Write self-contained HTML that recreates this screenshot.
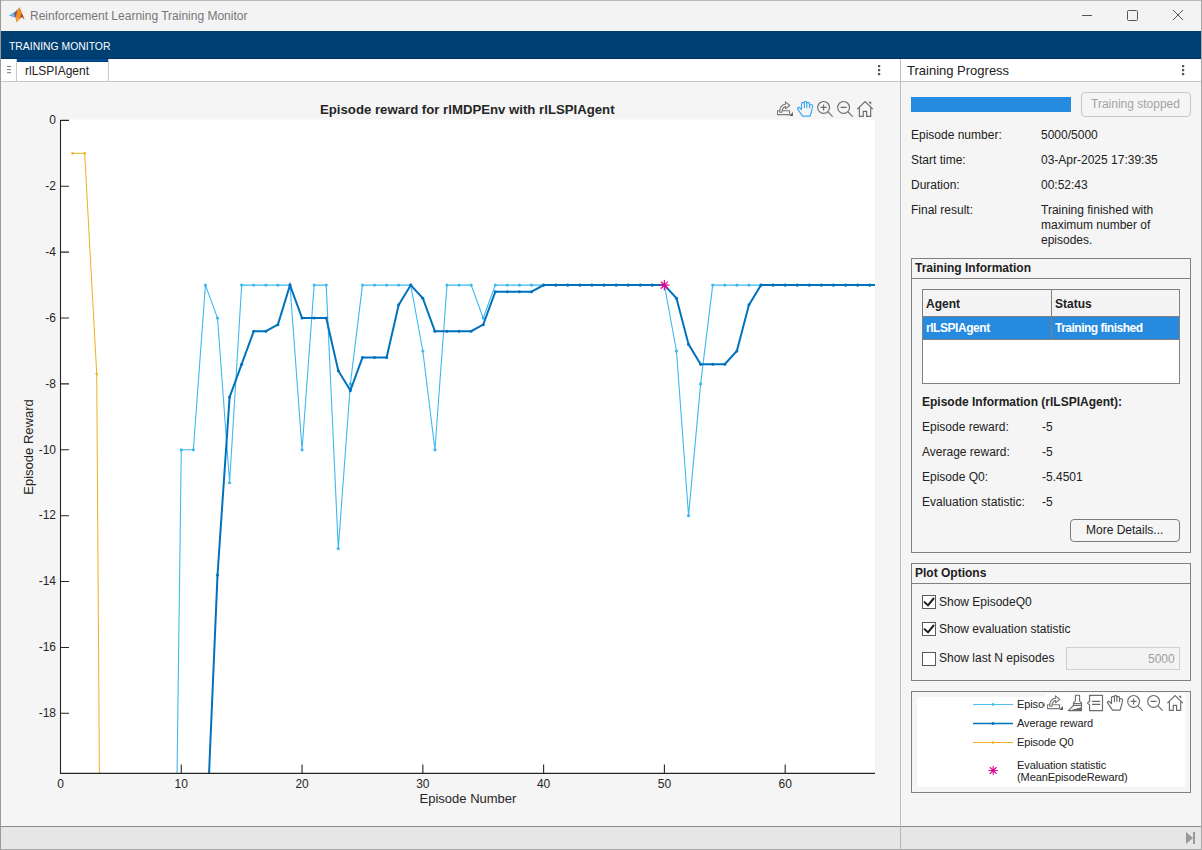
<!DOCTYPE html>
<html><head><meta charset="utf-8">
<style>
*{box-sizing:border-box;margin:0;padding:0}
html,body{width:1202px;height:850px;overflow:hidden;background:#f5f5f5;font-family:"Liberation Sans",sans-serif;color:#212121}
.a{position:absolute}
#win{position:absolute;left:0;top:0;width:1202px;height:850px;background:#f5f5f5}
#title{left:0;top:0;width:1202px;height:31px;background:#f3f3f3}
#title .t{left:30px;top:9px;font-size:12px;color:#777;white-space:nowrap}
#bluebar{left:0;top:31px;width:1202px;height:28px;background:#003f72;border-bottom:1px solid #002f66}
#bluebar .t{left:9px;top:10px;font-size:10.4px;color:#fff;white-space:nowrap;letter-spacing:0px}
.lbl{font-size:12px;white-space:nowrap;color:#212121}
.b{font-weight:bold}
svg{position:absolute;left:0;top:0;overflow:visible}
</style></head><body>
<div id="win">
<!-- title bar -->
<div class="a" id="title">
  <svg width="30" height="30" viewBox="0 0 30 30">
    <path d="M9 15.6 L13.5 12.8 L17.6 9.6 L17 14.5 L15.2 17.6 Z" fill="#4a9de0"/>
    <path d="M9 15.6 L12.5 13.6 L15 15.5 Z" fill="#7cc0f2"/>
    <path d="M14.6 13.2 L19.6 7.6 L24.6 19.4 L21.6 17 L16.6 22 Z" fill="#b53c18"/>
    <path d="M17.2 10.6 L19.6 7.6 L21.8 13.4 L19.6 18.6 L16.6 22 L15.8 17.8 Z" fill="#ef8f2c"/>
    <path d="M16.6 22 L19.6 18.6 L17 17.5 Z" fill="#f5b13c"/>
  </svg>
  <div class="a t">Reinforcement Learning Training Monitor</div>
  <svg width="1202" height="31">
    <line x1="1082" y1="15.5" x2="1092" y2="15.5" stroke="#555" stroke-width="1"/>
    <rect x="1127.5" y="10.5" width="10" height="10" rx="1" fill="none" stroke="#555" stroke-width="1"/>
    <path d="M1173 10 L1183 20 M1183 10 L1173 20" stroke="#555" stroke-width="1"/>
  </svg>
</div>
<div class="a" id="bluebar"><div class="a t">TRAINING MONITOR</div></div>

<!-- left tab row -->
<div class="a" style="left:0;top:59px;width:900px;height:23px;background:#fff;border-bottom:1px solid #c6c6c6"></div>
<div class="a" style="left:0;top:59px;width:17px;height:23px;background:#fff;border-right:1px solid #c8c8c8;border-bottom:1px solid #c8c8c8"></div>
<svg width="20" height="90"><path d="M7 66.5 H11 M7 69.7 H11 M7 72.7 H11" stroke="#7a7a7a" stroke-width="1"/></svg>
<div class="a" style="left:17px;top:59px;width:91px;height:3px;background:#004f8c;border-bottom:1px solid #003d80"></div>
<div class="a" style="left:108px;top:59px;width:1px;height:23px;background:#c8c8c8"></div>
<div class="a lbl" style="left:25px;top:64px;font-size:12px">rlLSPIAgent</div>
<svg width="900" height="90"><path d="M878 65h2.2v2.2h-2.2z M878 69h2.2v2.2h-2.2z M878 73h2.2v2.2h-2.2z" fill="#555"/></svg>

<!-- plot area -->
<div class="a b" style="left:320px;top:102px;font-size:13.2px;color:#262626;white-space:nowrap">Episode reward for rlMDPEnv with rlLSPIAgent</div>
<svg width="900" height="830">
  <rect x="60.5" y="119.5" width="814.5" height="654" fill="#fff"/>
  <defs><clipPath id="pc"><rect x="60.5" y="119.5" width="814.5" height="654"/></clipPath></defs>
  <g clip-path="url(#pc)">
  
<polyline points="72.58,153.34 84.66,153.34 96.73,374.04 108.81,2185.74 120.89,2096.80 132.97,2096.80 145.05,2096.80 157.12,2096.80 169.20,2096.80 181.28,2096.80 193.36,2096.80 205.44,2096.80 217.51,2096.80 229.59,2096.80 241.67,2096.80 253.75,2096.80 265.83,2096.80 277.90,2096.80 289.98,2096.80 302.06,2096.80 314.14,2096.80 326.22,2096.80 338.29,2096.80 350.37,2096.80 362.45,2096.80 374.53,2096.80 386.61,2096.80 398.68,2096.80 410.76,2096.80 422.84,2096.80 434.92,2096.80 447.00,2096.80 459.07,2096.80 471.15,2096.80 483.23,2096.80 495.31,2096.80 507.39,2096.80 519.46,2096.80 531.54,2096.80 543.62,2096.80 555.70,2096.80 567.78,2096.80 579.85,2096.80 591.93,2096.80 604.01,2096.80 616.09,2096.80 628.17,2096.80 640.24,2096.80 652.32,2096.80 664.40,2096.80 676.48,2096.80 688.56,2096.80 700.63,2096.80 712.71,2096.80 724.79,2096.80 736.87,2096.80 748.95,2096.80 761.02,2096.80 773.10,2096.80 785.18,2096.80 797.26,2096.80 809.34,2096.80 821.41,2096.80 833.49,2096.80 845.57,2096.80 857.65,2096.80 869.73,2096.80 881.80,2096.80 893.88,2096.80 905.96,2096.80" fill="none" stroke="#EDB120" stroke-width="1"/>
<g fill="#EDB120"><circle cx="72.58" cy="153.34" r="1.3"/><circle cx="84.66" cy="153.34" r="1.3"/><circle cx="96.73" cy="374.04" r="1.3"/></g>
<polyline points="72.58,2096.80 84.66,1932.10 96.73,1767.40 108.81,1701.52 120.89,1602.70 132.97,1503.88 145.05,1438.00 157.12,1734.46 169.20,1372.12 181.28,449.80 193.36,449.80 205.44,285.10 217.51,318.04 229.59,482.74 241.67,285.10 253.75,285.10 265.83,285.10 277.90,285.10 289.98,285.10 302.06,449.80 314.14,285.10 326.22,285.10 338.29,548.62 350.37,383.92 362.45,285.10 374.53,285.10 386.61,285.10 398.68,285.10 410.76,285.10 422.84,350.98 434.92,449.80 447.00,285.10 459.07,285.10 471.15,285.10 483.23,318.04 495.31,285.10 507.39,285.10 519.46,285.10 531.54,285.10 543.62,285.10 555.70,285.10 567.78,285.10 579.85,285.10 591.93,285.10 604.01,285.10 616.09,285.10 628.17,285.10 640.24,285.10 652.32,285.10 664.40,285.10 676.48,350.98 688.56,515.68 700.63,383.92 712.71,285.10 724.79,285.10 736.87,285.10 748.95,285.10 761.02,285.10 773.10,285.10 785.18,285.10 797.26,285.10 809.34,285.10 821.41,285.10 833.49,285.10 845.57,285.10 857.65,285.10 869.73,285.10 881.80,285.10 893.88,285.10 905.96,285.10" fill="none" stroke="#3FB8EE" stroke-width="1.1"/>
<g fill="#3FB8EE"><circle cx="181.28" cy="449.80" r="1.6"/><circle cx="193.36" cy="449.80" r="1.6"/><circle cx="205.44" cy="285.10" r="1.6"/><circle cx="217.51" cy="318.04" r="1.6"/><circle cx="229.59" cy="482.74" r="1.6"/><circle cx="241.67" cy="285.10" r="1.6"/><circle cx="253.75" cy="285.10" r="1.6"/><circle cx="265.83" cy="285.10" r="1.6"/><circle cx="277.90" cy="285.10" r="1.6"/><circle cx="289.98" cy="285.10" r="1.6"/><circle cx="302.06" cy="449.80" r="1.6"/><circle cx="314.14" cy="285.10" r="1.6"/><circle cx="326.22" cy="285.10" r="1.6"/><circle cx="338.29" cy="548.62" r="1.6"/><circle cx="350.37" cy="383.92" r="1.6"/><circle cx="362.45" cy="285.10" r="1.6"/><circle cx="374.53" cy="285.10" r="1.6"/><circle cx="386.61" cy="285.10" r="1.6"/><circle cx="398.68" cy="285.10" r="1.6"/><circle cx="410.76" cy="285.10" r="1.6"/><circle cx="422.84" cy="350.98" r="1.6"/><circle cx="434.92" cy="449.80" r="1.6"/><circle cx="447.00" cy="285.10" r="1.6"/><circle cx="459.07" cy="285.10" r="1.6"/><circle cx="471.15" cy="285.10" r="1.6"/><circle cx="483.23" cy="318.04" r="1.6"/><circle cx="495.31" cy="285.10" r="1.6"/><circle cx="507.39" cy="285.10" r="1.6"/><circle cx="519.46" cy="285.10" r="1.6"/><circle cx="531.54" cy="285.10" r="1.6"/><circle cx="543.62" cy="285.10" r="1.6"/><circle cx="555.70" cy="285.10" r="1.6"/><circle cx="567.78" cy="285.10" r="1.6"/><circle cx="579.85" cy="285.10" r="1.6"/><circle cx="591.93" cy="285.10" r="1.6"/><circle cx="604.01" cy="285.10" r="1.6"/><circle cx="616.09" cy="285.10" r="1.6"/><circle cx="628.17" cy="285.10" r="1.6"/><circle cx="640.24" cy="285.10" r="1.6"/><circle cx="652.32" cy="285.10" r="1.6"/><circle cx="664.40" cy="285.10" r="1.6"/><circle cx="676.48" cy="350.98" r="1.6"/><circle cx="688.56" cy="515.68" r="1.6"/><circle cx="700.63" cy="383.92" r="1.6"/><circle cx="712.71" cy="285.10" r="1.6"/><circle cx="724.79" cy="285.10" r="1.6"/><circle cx="736.87" cy="285.10" r="1.6"/><circle cx="748.95" cy="285.10" r="1.6"/><circle cx="761.02" cy="285.10" r="1.6"/><circle cx="773.10" cy="285.10" r="1.6"/><circle cx="785.18" cy="285.10" r="1.6"/><circle cx="797.26" cy="285.10" r="1.6"/><circle cx="809.34" cy="285.10" r="1.6"/><circle cx="821.41" cy="285.10" r="1.6"/><circle cx="833.49" cy="285.10" r="1.6"/><circle cx="845.57" cy="285.10" r="1.6"/><circle cx="857.65" cy="285.10" r="1.6"/><circle cx="869.73" cy="285.10" r="1.6"/><circle cx="881.80" cy="285.10" r="1.6"/><circle cx="893.88" cy="285.10" r="1.6"/><circle cx="905.96" cy="285.10" r="1.6"/></g>
<polyline points="72.58,2096.80 84.66,2014.45 96.73,1932.10 108.81,1874.45 120.89,1820.10 132.97,1701.52 145.05,1602.70 157.12,1596.11 169.20,1530.23 181.28,1299.65 193.36,1088.84 205.44,858.26 217.51,574.97 229.59,397.10 241.67,364.16 253.75,331.22 265.83,331.22 277.90,324.63 289.98,285.10 302.06,318.04 314.14,318.04 326.22,318.04 338.29,370.74 350.37,390.51 362.45,357.57 374.53,357.57 386.61,357.57 398.68,304.86 410.76,285.10 422.84,298.28 434.92,331.22 447.00,331.22 459.07,331.22 471.15,331.22 483.23,324.63 495.31,291.69 507.39,291.69 519.46,291.69 531.54,291.69 543.62,285.10 555.70,285.10 567.78,285.10 579.85,285.10 591.93,285.10 604.01,285.10 616.09,285.10 628.17,285.10 640.24,285.10 652.32,285.10 664.40,285.10 676.48,298.28 688.56,344.39 700.63,364.16 712.71,364.16 724.79,364.16 736.87,350.98 748.95,304.86 761.02,285.10 773.10,285.10 785.18,285.10 797.26,285.10 809.34,285.10 821.41,285.10 833.49,285.10 845.57,285.10 857.65,285.10 869.73,285.10 881.80,285.10 893.88,285.10 905.96,285.10" fill="none" stroke="#0072BD" stroke-width="2"/>
<g fill="#0072BD"><circle cx="217.51" cy="574.97" r="1.5"/><circle cx="229.59" cy="397.10" r="1.5"/><circle cx="241.67" cy="364.16" r="1.5"/><circle cx="253.75" cy="331.22" r="1.5"/><circle cx="265.83" cy="331.22" r="1.5"/><circle cx="277.90" cy="324.63" r="1.5"/><circle cx="289.98" cy="285.10" r="1.5"/><circle cx="302.06" cy="318.04" r="1.5"/><circle cx="314.14" cy="318.04" r="1.5"/><circle cx="326.22" cy="318.04" r="1.5"/><circle cx="338.29" cy="370.74" r="1.5"/><circle cx="350.37" cy="390.51" r="1.5"/><circle cx="362.45" cy="357.57" r="1.5"/><circle cx="374.53" cy="357.57" r="1.5"/><circle cx="386.61" cy="357.57" r="1.5"/><circle cx="398.68" cy="304.86" r="1.5"/><circle cx="410.76" cy="285.10" r="1.5"/><circle cx="422.84" cy="298.28" r="1.5"/><circle cx="434.92" cy="331.22" r="1.5"/><circle cx="447.00" cy="331.22" r="1.5"/><circle cx="459.07" cy="331.22" r="1.5"/><circle cx="471.15" cy="331.22" r="1.5"/><circle cx="483.23" cy="324.63" r="1.5"/><circle cx="495.31" cy="291.69" r="1.5"/><circle cx="507.39" cy="291.69" r="1.5"/><circle cx="519.46" cy="291.69" r="1.5"/><circle cx="531.54" cy="291.69" r="1.5"/><circle cx="543.62" cy="285.10" r="1.5"/><circle cx="555.70" cy="285.10" r="1.5"/><circle cx="567.78" cy="285.10" r="1.5"/><circle cx="579.85" cy="285.10" r="1.5"/><circle cx="591.93" cy="285.10" r="1.5"/><circle cx="604.01" cy="285.10" r="1.5"/><circle cx="616.09" cy="285.10" r="1.5"/><circle cx="628.17" cy="285.10" r="1.5"/><circle cx="640.24" cy="285.10" r="1.5"/><circle cx="652.32" cy="285.10" r="1.5"/><circle cx="664.40" cy="285.10" r="1.5"/><circle cx="676.48" cy="298.28" r="1.5"/><circle cx="688.56" cy="344.39" r="1.5"/><circle cx="700.63" cy="364.16" r="1.5"/><circle cx="712.71" cy="364.16" r="1.5"/><circle cx="724.79" cy="364.16" r="1.5"/><circle cx="736.87" cy="350.98" r="1.5"/><circle cx="748.95" cy="304.86" r="1.5"/><circle cx="761.02" cy="285.10" r="1.5"/><circle cx="773.10" cy="285.10" r="1.5"/><circle cx="785.18" cy="285.10" r="1.5"/><circle cx="797.26" cy="285.10" r="1.5"/><circle cx="809.34" cy="285.10" r="1.5"/><circle cx="821.41" cy="285.10" r="1.5"/><circle cx="833.49" cy="285.10" r="1.5"/><circle cx="845.57" cy="285.10" r="1.5"/><circle cx="857.65" cy="285.10" r="1.5"/><circle cx="869.73" cy="285.10" r="1.5"/><circle cx="881.80" cy="285.10" r="1.5"/><circle cx="893.88" cy="285.10" r="1.5"/><circle cx="905.96" cy="285.10" r="1.5"/></g>

  </g>
<g stroke="#262626" stroke-width="1.1" fill="none"><path d="M60.5 120 V773.4 H875"/><path d="M60.5 120.40 h8.5 M60.5 186.28 h8.5 M60.5 252.16 h8.5 M60.5 318.04 h8.5 M60.5 383.92 h8.5 M60.5 449.80 h8.5 M60.5 515.68 h8.5 M60.5 581.56 h8.5 M60.5 647.44 h8.5 M60.5 713.32 h8.5"/><path d="M181.28 773.4 v-9 M302.06 773.4 v-9 M422.84 773.4 v-9 M543.62 773.4 v-9 M664.40 773.4 v-9 M785.18 773.4 v-9"/></g><g font-family="Liberation Sans" font-size="12" fill="#262626" text-anchor="end"><text x="56" y="124.20">0</text><text x="56" y="190.08">-2</text><text x="56" y="255.96">-4</text><text x="56" y="321.84">-6</text><text x="56" y="387.72">-8</text><text x="56" y="453.60">-10</text><text x="56" y="519.48">-12</text><text x="56" y="585.36">-14</text><text x="56" y="651.24">-16</text><text x="56" y="717.12">-18</text></g><g font-family="Liberation Sans" font-size="12" fill="#262626" text-anchor="middle"><text x="60.50" y="788">0</text><text x="181.28" y="788">10</text><text x="302.06" y="788">20</text><text x="422.84" y="788">30</text><text x="543.62" y="788">40</text><text x="664.40" y="788">50</text><text x="785.18" y="788">60</text><text x="468" y="803" font-size="13">Episode Number</text><text transform="translate(33 447) rotate(-90)" font-size="13">Episode Reward</text></g>
  <!-- eval star -->
  <g stroke="#dd0890" stroke-width="1.3" stroke-linecap="round" transform="translate(664.40 285.10)">
    <path d="M-4.6 0 H4.6 M0 -4.6 V4.6 M-3.2 -3.2 L3.2 3.2 M-3.2 3.2 L3.2 -3.2"/>
  </g>
  <!-- toolbar -->
  <defs>
    <symbol id="i-zin" viewBox="0 0 16 16" overflow="visible"><g fill="none" stroke="#6b6b6b" stroke-width="1.15"><circle cx="6.6" cy="6.4" r="5.9"/><path d="M10.8 10.6 L15.6 15.6 M3.6 6.4 h6 M6.6 3.4 v6"/></g></symbol>
    <symbol id="i-zout" viewBox="0 0 16 16" overflow="visible"><g fill="none" stroke="#6b6b6b" stroke-width="1.15"><circle cx="6.6" cy="6.4" r="5.9"/><path d="M10.8 10.6 L15.6 15.6 M3.6 6.4 h6"/></g></symbol>
    <symbol id="i-home" viewBox="0 0 16 16" overflow="visible"><g fill="none" stroke="#6b6b6b" stroke-width="1.15"><path d="M0.3 8.1 L8.1 0.6 L15.8 8.1 M2.4 6.2 V15.3 H6.25 V10.4 H9.6 V15.3 H13.7 V6.2"/></g><path d="M11.2 0.8 H14.2 V3.8 Z" fill="#6b6b6b"/></symbol>
    <symbol id="i-exp" viewBox="0 0 16 16" overflow="visible"><g fill="none" stroke="#7a7a7a" stroke-width="1.1" stroke-linejoin="round"><path d="M0.5 9.7 H12.6 V13.6 H0.5 Z"/><path d="M2.7 11.3 Q2.4 4 8.4 3.2 V0.9 L12.8 4.5 L8.6 7.9 V5.6 Q5.3 5.9 4.9 11.3 Z" fill="#f5f5f5"/></g><path d="M15.9 11 V14.9 H12.4 Z" fill="#555"/></symbol>
    <symbol id="i-hand" viewBox="0 0 16 16" overflow="visible"><path d="M5.5 15.1 L0.4 7.6 Q0.9 5.9 2.3 6.5 L4.5 8.6 V3 Q4.7 1.3 6 1.3 Q7.2 1.4 7.4 3 V6.6 V1.8 Q7.6 0.4 8.6 0.4 Q9.6 0.4 9.8 1.8 V6.6 V3 Q10 1.4 11.2 1.4 Q12.4 1.5 12.5 3 V6.6 V5 Q12.8 3.4 14.2 3.5 Q15.6 3.8 15.6 5.2 L14.6 10 L13.1 15.1 Z" fill="none" stroke="currentColor" stroke-width="1.15" stroke-linejoin="round"/></symbol>
    <symbol id="i-brush" viewBox="0 0 16 16" overflow="visible"><g fill="none" stroke="#6b6b6b" stroke-width="1.1" stroke-linejoin="round"><path d="M8.4 6.1 V0.3 H12.6 V6.1 L14.5 7.6 V15.6 H1.3 L6.5 10.5 V7.6 Z M6.5 8.6 H14.5 M6.5 10.5 H14.5"/></g><path d="M2.2 15.6 L14.5 12.2 V15.6 Z" fill="#666"/></symbol>
    <symbol id="i-leg" viewBox="0 0 16 16" overflow="visible"><g fill="none" stroke="#6b6b6b" stroke-width="1.15"><path d="M2.6 0.4 H15.5 V15.6 H2.6 V9.7 L0.5 8 L2.6 6.3 Z M5 6.4 H13.2 M5 9.4 H13.2"/></g></symbol>
  </defs>
  <use href="#i-exp" x="777" y="101" width="16" height="16"/>
  <use href="#i-hand" x="797" y="101" width="16" height="16" style="color:#3ca8f0"/>
  <use href="#i-zin" x="817" y="101" width="16" height="16"/>
  <use href="#i-zout" x="837" y="101" width="16" height="16"/>
  <use href="#i-home" x="857" y="101" width="16" height="16"/>
</svg>

<!-- divider -->
<div class="a" style="left:900px;top:59px;width:1px;height:791px;background:#bdbdbd"></div>

<!-- right panel -->
<div class="a" style="left:901px;top:59px;width:300px;height:23px;background:#fff;border-bottom:1px solid #c6c6c6"></div>
<div class="a lbl" style="left:907px;top:63px;font-size:13px">Training Progress</div>
<svg width="1202" height="90"><path d="M1182 65h2.2v2.2h-2.2z M1182 69h2.2v2.2h-2.2z M1182 73h2.2v2.2h-2.2z" fill="#555"/></svg>

<div class="a" style="left:911px;top:97px;width:160px;height:15px;background:#268bde"></div>
<div class="a" style="left:1081px;top:92px;width:110px;height:25px;border:1px solid #c6c6c6;border-radius:4px;background:#f5f5f5"></div>
<div class="a lbl" style="left:1091px;top:97px;color:#a3a3a3">Training stopped</div>

<div class="a lbl" style="left:911px;top:128px">Episode number:</div><div class="a lbl" style="left:1041px;top:128px">5000/5000</div>
<div class="a lbl" style="left:911px;top:153px">Start time:</div><div class="a lbl" style="left:1041px;top:153px">03-Apr-2025 17:39:35</div>
<div class="a lbl" style="left:911px;top:178px">Duration:</div><div class="a lbl" style="left:1041px;top:178px">00:52:43</div>
<div class="a lbl" style="left:911px;top:203px">Final result:</div>
<div class="a lbl" style="left:1041px;top:203px;line-height:15px">Training finished with<br>maximum number of<br>episodes.</div>

<!-- Training information group -->
<div class="a" style="left:911px;top:258px;width:280px;height:295px;border:1px solid #808080"></div>
<div class="a" style="left:911px;top:278px;width:280px;height:1px;background:#808080"></div>
<div class="a lbl b" style="left:915px;top:261px">Training Information</div>
<div class="a" style="left:922px;top:289px;width:258px;height:95px;border:1px solid #808080;background:#fff"></div>
<div class="a" style="left:923px;top:290px;width:256px;height:27px;background:#f4f4f4;border-bottom:1px solid #808080"></div>
<div class="a" style="left:923px;top:317px;width:256px;height:23px;background:#268bde;border-bottom:1px solid #808080"></div>
<div class="a" style="left:1051px;top:290px;width:1px;height:50px;background:#808080"></div>
<div class="a lbl b" style="left:926px;top:297px">Agent</div>
<div class="a lbl b" style="left:1055px;top:297px">Status</div>
<div class="a lbl b" style="left:926px;top:321px;color:#fff;letter-spacing:-0.45px">rlLSPIAgent</div>
<div class="a lbl b" style="left:1055px;top:321px;color:#fff;letter-spacing:-0.5px">Training finished</div>

<div class="a lbl b" style="left:922px;top:395px">Episode Information (rlLSPIAgent):</div>
<div class="a lbl" style="left:922px;top:420px">Episode reward:</div><div class="a lbl" style="left:1042px;top:420px">-5</div>
<div class="a lbl" style="left:922px;top:445px">Average reward:</div><div class="a lbl" style="left:1042px;top:445px">-5</div>
<div class="a lbl" style="left:922px;top:470px">Episode Q0:</div><div class="a lbl" style="left:1042px;top:470px">-5.4501</div>
<div class="a lbl" style="left:922px;top:495px">Evaluation statistic:</div><div class="a lbl" style="left:1042px;top:495px">-5</div>
<div class="a" style="left:1070px;top:519px;width:110px;height:23px;border:1px solid #7a7a7a;border-radius:4px;background:#f5f5f5"></div>
<div class="a lbl" style="left:1086px;top:523px">More Details...</div>

<!-- Plot options -->
<div class="a" style="left:911px;top:563px;width:280px;height:118px;border:1px solid #808080"></div>
<div class="a" style="left:911px;top:583px;width:280px;height:1px;background:#808080"></div>
<div class="a lbl b" style="left:915px;top:566px">Plot Options</div>
<div class="a" style="left:922px;top:595px;width:14px;height:14px;border:1px solid #5a5a5a;background:#fff"></div>
<div class="a" style="left:922px;top:622px;width:14px;height:14px;border:1px solid #5a5a5a;background:#fff"></div>
<div class="a" style="left:922px;top:652px;width:14px;height:14px;border:1px solid #5a5a5a;background:#fff"></div>
<svg width="1202" height="850"><path d="M924 601.6 L928 605.4 L934 598 M924 628.6 L928 632.4 L934 625" fill="none" stroke="#1e1e1e" stroke-width="2"/></svg>
<div class="a lbl" style="left:939px;top:595px">Show EpisodeQ0</div>
<div class="a lbl" style="left:939px;top:622px">Show evaluation statistic</div>
<div class="a lbl" style="left:939px;top:651px">Show last N episodes</div>
<div class="a" style="left:1066px;top:647px;width:114px;height:23px;border:1px solid #d0d0d0;background:#f3f3f3"></div>
<div class="a lbl" style="left:1148px;top:652px;color:#9e9e9e">5000</div>

<!-- legend -->
<div class="a" style="left:911px;top:691px;width:280px;height:102px;border:1px solid #808080"></div>
<div class="a" style="left:917px;top:697px;width:268px;height:90px;background:#fff"></div>
<svg width="1202" height="850">
  <line x1="973" y1="704.5" x2="1013" y2="704.5" stroke="#4DBEEE"/><circle cx="993" cy="704.5" r="1.4" fill="#4DBEEE"/>
  <line x1="973" y1="723.5" x2="1013" y2="723.5" stroke="#0072BD" stroke-width="1.5"/><circle cx="993" cy="723.5" r="1.5" fill="#0072BD"/>
  <line x1="973" y1="742.5" x2="1013" y2="742.5" stroke="#EDB120"/><circle cx="993" cy="742.5" r="1.3" fill="#EDB120"/>
  <g stroke="#dd0890" stroke-width="1.1" stroke-linecap="round" transform="translate(993.2 770.5)"><path d="M-4.3 0 H4.3 M0 -4.3 V4.3 M-3 -3 L3 3 M-3 3 L3 -3"/></g>
</svg>
<div class="a lbl" style="left:1017px;top:698px;font-size:11px;letter-spacing:-0.1px">Episode reward</div>
<div class="a lbl" style="left:1017px;top:717px;font-size:11px;letter-spacing:-0.1px">Average reward</div>
<div class="a lbl" style="left:1017px;top:736px;font-size:11px;letter-spacing:-0.1px">Episode Q0</div>
<div class="a lbl" style="left:1017px;top:759px;font-size:11px;line-height:12px;letter-spacing:-0.1px">Evaluation statistic<br>(MeanEpisodeReward)</div>
<div class="a" style="left:1045px;top:693px;width:140px;height:21px;background:#fff"></div>
<svg width="1202" height="850">
  <use href="#i-exp" x="1047" y="695" width="16" height="16"/>
  <use href="#i-brush" x="1067" y="695" width="16" height="16"/>
  <use href="#i-leg" x="1087" y="695" width="16" height="16"/>
  <use href="#i-hand" x="1107" y="695" width="16" height="16" style="color:#6b6b6b"/>
  <use href="#i-zin" x="1127" y="695" width="16" height="16"/>
  <use href="#i-zout" x="1147" y="695" width="16" height="16"/>
  <use href="#i-home" x="1167" y="695" width="16" height="16"/>
</svg>

<!-- status bar -->
<div class="a" style="left:0;top:826px;width:1202px;height:24px;background:#e6e6e6;border-top:1px solid #8a8a8a;border-bottom:1px solid #a8a8a8"></div>
<div class="a" style="left:900px;top:826px;width:1px;height:24px;background:#b5b5b5"></div>
<svg width="1202" height="850"><path d="M1186 832 L1193 838 L1186 844 Z" fill="#999"/><rect x="1193" y="832" width="2" height="12" fill="#999"/></svg>
<div class="a" style="left:0;top:0;width:1202px;height:1px;background:#b9b9b9"></div>
<div class="a" style="left:0;top:0;width:1px;height:850px;background:#9a9a9a"></div>
<div class="a" style="left:1201px;top:0;width:1px;height:850px;background:#a8a8a8"></div>
</div>
</body></html>
